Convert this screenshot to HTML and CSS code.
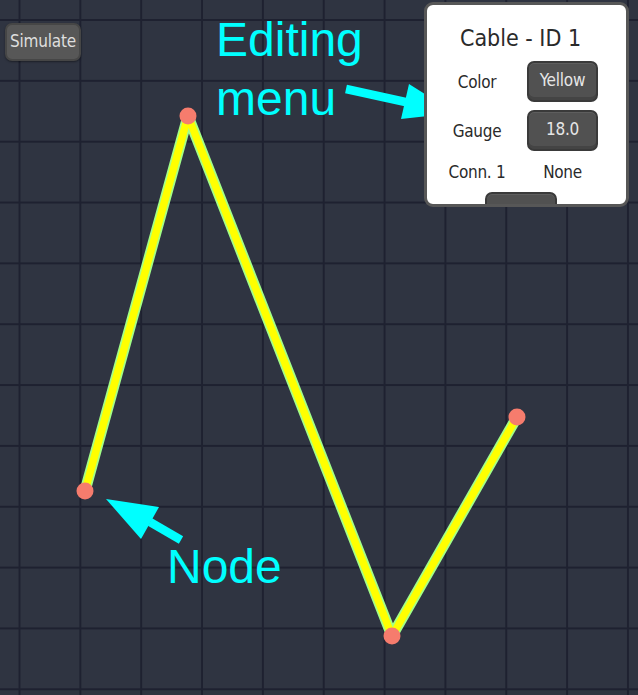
FILE: index.html
```html
<!DOCTYPE html>
<html>
<head>
<meta charset="utf-8">
<link rel="stylesheet" href="styles.css">
</head>
<body>
<div class="canvas">
  <svg class="drawing" width="638" height="695" viewBox="0 0 638 695">
    <polyline class="cable-edge" points="85,491 188,116 392,636 517,417"/>
    <polyline class="cable-core" points="85,491 188,116 392,636 517,417"/>
    <circle class="node" cx="188" cy="116" r="8.5"/>
    <circle class="node" cx="85" cy="491" r="8.5"/>
    <circle class="node" cx="392" cy="636" r="8.5"/>
    <circle class="node" cx="517" cy="417" r="8.5"/>
    <line class="arrow-shaft" x1="346" y1="89" x2="410" y2="103"/>
    <polygon class="arrow-head" points="409,84 401,119 455,113"/>
    <line class="arrow-shaft" x1="150" y1="522" x2="181" y2="540"/>
    <polygon class="arrow-head" points="106,499 159,507 141,539"/>
  </svg>

  <button class="sim-btn">Simulate</button>

  <div class="note note-menu">Editing<br>menu</div>
  <div class="note note-node">Node</div>

  <div class="panel">
    <div class="panel-title">Cable - ID 1</div>
    <div class="rows">
      <div class="label">Color</div>
      <div class="btn">Yellow</div>
      <div class="label">Gauge</div>
      <div class="btn">18.0</div>
      <div class="label conn">Conn. 1</div>
      <div class="value conn">None</div>
    </div>
    <div class="btn partial"></div>
  </div>
</div>
</body>
</html>
```

FILE: styles.css
```css
html, body {
  margin: 0;
  padding: 0;
  background: #2f3441;
}

.canvas {
  position: relative;
  width: 638px;
  height: 695px;
  overflow: hidden;
  background-color: #2f3441;
  background-image:
    linear-gradient(to right, #1e2130 0, #1e2130 2px, transparent 2px),
    linear-gradient(to bottom, #1e2130 0, #1e2130 2px, transparent 2px);
  background-size: 60.85px 60.85px;
  background-position: 18.5px 19px;
}

.drawing {
  position: absolute;
  left: 0;
  top: 0;
}

.cable-edge {
  fill: none;
  stroke: #a4ff86;
  stroke-width: 11;
  stroke-linejoin: round;
}

.cable-core {
  fill: none;
  stroke: #ffff00;
  stroke-width: 7.5;
  stroke-linejoin: round;
}

.node {
  fill: #f67c6d;
}

.arrow-shaft {
  stroke: #00ffff;
  stroke-width: 8.5;
}

.arrow-head {
  fill: #00ffff;
}

.sim-btn {
  position: absolute;
  left: 5px;
  top: 23px;
  width: 76px;
  height: 38px;
  margin: 0;
  padding: 0 0 2px 0;
  box-sizing: border-box;
  background: #575757;
  border: 2px solid #464646;
  border-radius: 7px;
  box-shadow: 0 1px 2px rgba(0, 0, 0, 0.4);
  color: #dedede;
  font-family: "DejaVu Sans Condensed", Roboto, sans-serif;
  font-stretch: condensed;
  font-size: 17px;
  letter-spacing: -0.2px;
}

.note {
  position: absolute;
  color: #00ffff;
  font-family: "Liberation Sans", Arial, sans-serif;
  font-size: 48px;
}

.note-menu {
  left: 216px;
  top: 10px;
  line-height: 59px;
}

.note-node {
  left: 167px;
  top: 543px;
  line-height: 48px;
}

.panel {
  position: absolute;
  left: 424px;
  top: 2px;
  width: 205px;
  height: 205px;
  box-sizing: border-box;
  background: #ffffff;
  border: 3px solid #575757;
  border-radius: 9px;
  overflow: hidden;
  padding: 18px 12px 0 0;
  display: flex;
  flex-direction: column;
  align-items: center;
  font-family: "DejaVu Sans Condensed", Roboto, sans-serif;
  font-stretch: condensed;
  color: #2a2a2a;
}

.panel-title {
  font-size: 23px;
  line-height: 30px;
  height: 30px;
}

.rows {
  margin-top: 8px;
  display: grid;
  grid-template-columns: 100px 71px;
  align-self: flex-start;
  row-gap: 8px;
  align-items: center;
}

.label, .value {
  text-align: center;
  font-size: 17px;
  letter-spacing: -0.3px;
}

.btn {
  height: 41px;
  box-sizing: border-box;
  background: #515151;
  border: 2px solid #3a3a3a;
  border-radius: 7px;
  box-shadow: inset 0 -3px 0 #444444, inset 0 1px 0 #5e5e5e;
  color: #e6e6e6;
  font-size: 17px;
  letter-spacing: -0.2px;
  display: flex;
  align-items: center;
  justify-content: center;
  padding-bottom: 3px;
}

.conn {
  height: 22px;
  line-height: 22px;
  margin-top: 2px;
}

.btn.partial {
  width: 72px;
  flex-shrink: 0;
  margin-top: 9px;
}
```
